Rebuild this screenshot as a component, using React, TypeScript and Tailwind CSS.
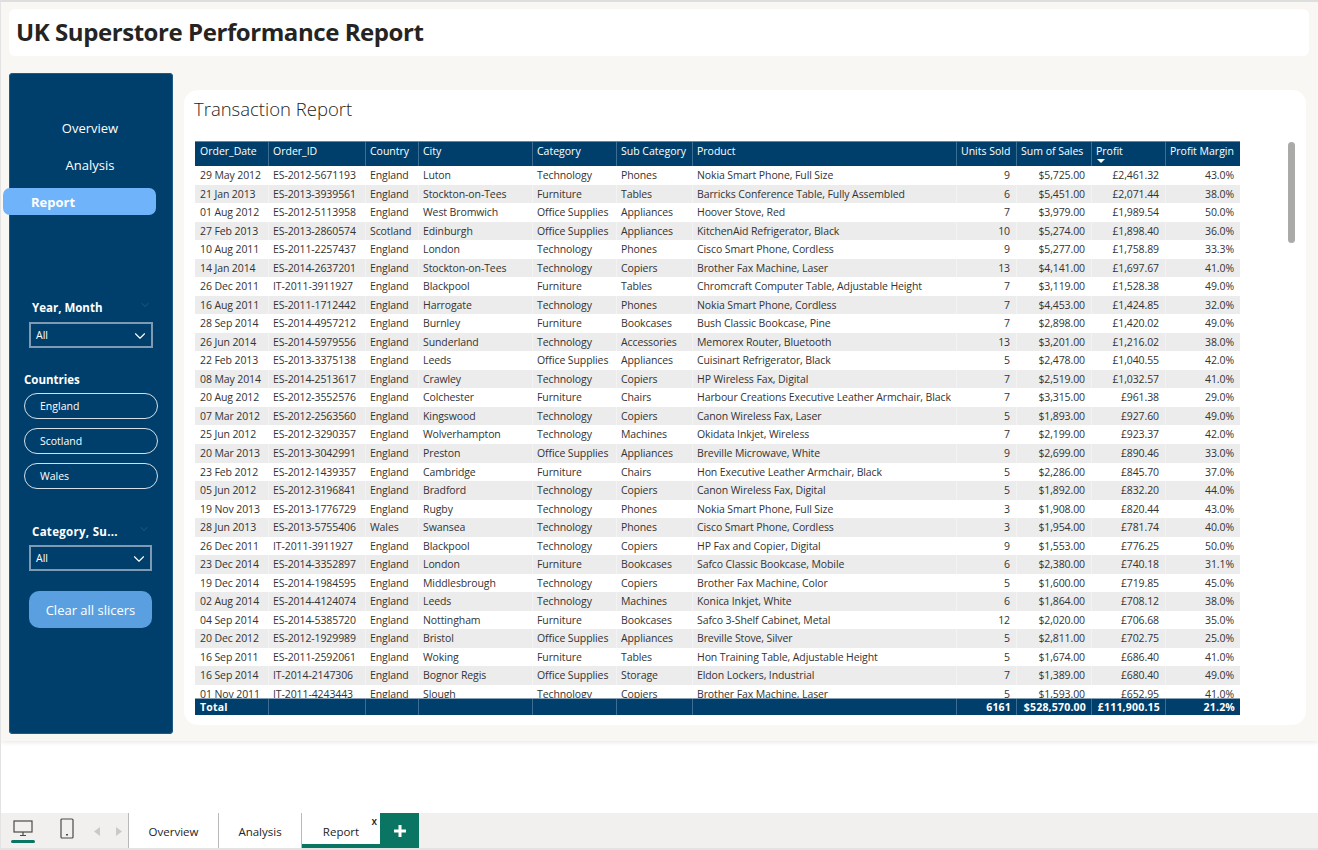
import { ChevronDown } from 'lucide-react'

const FONT = 'font-["Open_Sans",sans-serif]'
const COLS = 'grid grid-cols-[73px_97px_53px_114px_84px_76px_264px_60px_75px_74px_75px]'

const HEADERS = [
  'Order_Date', 'Order_ID', 'Country', 'City', 'Category', 'Sub Category', 'Product',
  'Units Sold', 'Sum of Sales', 'Profit', 'Profit Margin',
]

const ROWS = [
  ['29 May 2012', 'ES-2012-5671193', 'England', 'Luton', 'Technology', 'Phones', 'Nokia Smart Phone, Full Size', '9', '$5,725.00', '£2,461.32', '43.0%'],
  ['21 Jan 2013', 'ES-2013-3939561', 'England', 'Stockton-on-Tees', 'Furniture', 'Tables', 'Barricks Conference Table, Fully Assembled', '6', '$5,451.00', '£2,071.44', '38.0%'],
  ['01 Aug 2012', 'ES-2012-5113958', 'England', 'West Bromwich', 'Office Supplies', 'Appliances', 'Hoover Stove, Red', '7', '$3,979.00', '£1,989.54', '50.0%'],
  ['27 Feb 2013', 'ES-2013-2860574', 'Scotland', 'Edinburgh', 'Office Supplies', 'Appliances', 'KitchenAid Refrigerator, Black', '10', '$5,274.00', '£1,898.40', '36.0%'],
  ['10 Aug 2011', 'ES-2011-2257437', 'England', 'London', 'Technology', 'Phones', 'Cisco Smart Phone, Cordless', '9', '$5,277.00', '£1,758.89', '33.3%'],
  ['14 Jan 2014', 'ES-2014-2637201', 'England', 'Stockton-on-Tees', 'Technology', 'Copiers', 'Brother Fax Machine, Laser', '13', '$4,141.00', '£1,697.67', '41.0%'],
  ['26 Dec 2011', 'IT-2011-3911927', 'England', 'Blackpool', 'Furniture', 'Tables', 'Chromcraft Computer Table, Adjustable Height', '7', '$3,119.00', '£1,528.38', '49.0%'],
  ['16 Aug 2011', 'ES-2011-1712442', 'England', 'Harrogate', 'Technology', 'Phones', 'Nokia Smart Phone, Cordless', '7', '$4,453.00', '£1,424.85', '32.0%'],
  ['28 Sep 2014', 'ES-2014-4957212', 'England', 'Burnley', 'Furniture', 'Bookcases', 'Bush Classic Bookcase, Pine', '7', '$2,898.00', '£1,420.02', '49.0%'],
  ['26 Jun 2014', 'ES-2014-5979556', 'England', 'Sunderland', 'Technology', 'Accessories', 'Memorex Router, Bluetooth', '13', '$3,201.00', '£1,216.02', '38.0%'],
  ['22 Feb 2013', 'ES-2013-3375138', 'England', 'Leeds', 'Office Supplies', 'Appliances', 'Cuisinart Refrigerator, Black', '5', '$2,478.00', '£1,040.55', '42.0%'],
  ['08 May 2014', 'ES-2014-2513617', 'England', 'Crawley', 'Technology', 'Copiers', 'HP Wireless Fax, Digital', '7', '$2,519.00', '£1,032.57', '41.0%'],
  ['20 Aug 2012', 'ES-2012-3552576', 'England', 'Colchester', 'Furniture', 'Chairs', 'Harbour Creations Executive Leather Armchair, Black', '7', '$3,315.00', '£961.38', '29.0%'],
  ['07 Mar 2012', 'ES-2012-2563560', 'England', 'Kingswood', 'Technology', 'Copiers', 'Canon Wireless Fax, Laser', '5', '$1,893.00', '£927.60', '49.0%'],
  ['25 Jun 2012', 'ES-2012-3290357', 'England', 'Wolverhampton', 'Technology', 'Machines', 'Okidata Inkjet, Wireless', '7', '$2,199.00', '£923.37', '42.0%'],
  ['20 Mar 2013', 'ES-2013-3042991', 'England', 'Preston', 'Office Supplies', 'Appliances', 'Breville Microwave, White', '9', '$2,699.00', '£890.46', '33.0%'],
  ['23 Feb 2012', 'ES-2012-1439357', 'England', 'Cambridge', 'Furniture', 'Chairs', 'Hon Executive Leather Armchair, Black', '5', '$2,286.00', '£845.70', '37.0%'],
  ['05 Jun 2012', 'ES-2012-3196841', 'England', 'Bradford', 'Technology', 'Copiers', 'Canon Wireless Fax, Digital', '5', '$1,892.00', '£832.20', '44.0%'],
  ['19 Nov 2013', 'ES-2013-1776729', 'England', 'Rugby', 'Technology', 'Phones', 'Nokia Smart Phone, Full Size', '3', '$1,908.00', '£820.44', '43.0%'],
  ['28 Jun 2013', 'ES-2013-5755406', 'Wales', 'Swansea', 'Technology', 'Phones', 'Cisco Smart Phone, Cordless', '3', '$1,954.00', '£781.74', '40.0%'],
  ['26 Dec 2011', 'IT-2011-3911927', 'England', 'Blackpool', 'Technology', 'Copiers', 'HP Fax and Copier, Digital', '9', '$1,553.00', '£776.25', '50.0%'],
  ['23 Dec 2014', 'ES-2014-3352897', 'England', 'London', 'Furniture', 'Bookcases', 'Safco Classic Bookcase, Mobile', '6', '$2,380.00', '£740.18', '31.1%'],
  ['19 Dec 2014', 'ES-2014-1984595', 'England', 'Middlesbrough', 'Technology', 'Copiers', 'Brother Fax Machine, Color', '5', '$1,600.00', '£719.85', '45.0%'],
  ['02 Aug 2014', 'ES-2014-4124074', 'England', 'Leeds', 'Technology', 'Machines', 'Konica Inkjet, White', '6', '$1,864.00', '£708.12', '38.0%'],
  ['04 Sep 2014', 'ES-2014-5385720', 'England', 'Nottingham', 'Furniture', 'Bookcases', 'Safco 3-Shelf Cabinet, Metal', '12', '$2,020.00', '£706.68', '35.0%'],
  ['20 Dec 2012', 'ES-2012-1929989', 'England', 'Bristol', 'Office Supplies', 'Appliances', 'Breville Stove, Silver', '5', '$2,811.00', '£702.75', '25.0%'],
  ['16 Sep 2011', 'ES-2011-2592061', 'England', 'Woking', 'Furniture', 'Tables', 'Hon Training Table, Adjustable Height', '5', '$1,674.00', '£686.40', '41.0%'],
  ['16 Sep 2014', 'IT-2014-2147306', 'England', 'Bognor Regis', 'Office Supplies', 'Storage', 'Eldon Lockers, Industrial', '7', '$1,389.00', '£680.40', '49.0%'],
  ['01 Nov 2011', 'IT-2011-4243443', 'England', 'Slough', 'Technology', 'Copiers', 'Brother Fax Machine, Laser', '5', '$1,593.00', '£652.95', '41.0%'],
]

const TOTALS = ['Total', '', '', '', '', '', '', '6161', '$528,570.00', '£111,900.15', '21.2%']

function Dropdown({ width }: { width: string }) {
  return (
    <div className={`${width} h-[26px] border-2 border-[#7f9ab3] flex items-center justify-between pl-[5px] pr-[2px] pt-[2px] text-[10.5px] text-white`}>
      All
      <ChevronDown size={18} strokeWidth={1.5} className="text-white" />
    </div>
  )
}

function Sidebar() {
  return (
    <aside className="w-[164px] h-[661px] shrink-0 rounded-[4px] bg-[#003f6b] shadow-[inset_0_0_0_1px_#1f5a85] text-white flex flex-col">
      <div className="pt-[46px] pr-[2px] flex flex-col items-center gap-[18px] text-[13px] h-[115px]">
        <span className="h-[19px] leading-[19px]">Overview</span>
        <span className="h-[19px] leading-[19px]">Analysis</span>
      </div>
      <div className="-ml-[6px] w-[153px] h-[27px] rounded-[7px] bg-[#6fb3fa] pl-[28px] text-[13px] leading-[29px] font-bold">
        Report
      </div>
      <div className="mt-[83px] pl-[20px] pr-[22px]">
        <div className="flex items-center justify-between pl-[3px] h-[19px] text-[11.5px] font-bold">
          Year, Month
          <ChevronDown size={12} strokeWidth={1} className="-mt-[6px] text-[#4d7391]" />
        </div>
        <div className="mt-[5px]">
          <Dropdown width="w-[124px]" />
        </div>
      </div>
      <div className="mt-[23px] pl-[15px]">
        <div className="h-[17px] leading-[17px] text-[11.5px] font-bold">Countries</div>
        <div className="mt-[5px] flex flex-col gap-[9px]">
          {['England', 'Scotland', 'Wales'].map(c => (
            <div key={c} className="w-[134px] h-[26px] rounded-full border border-[#d5dfe8] pl-[15px] text-[10.5px] leading-[24px]">
              {c}
            </div>
          ))}
        </div>
      </div>
      <div className="mt-[33px] pl-[20px] pr-[23px]">
        <div className="flex items-center justify-between pl-[3px] h-[19px] text-[11.5px] font-bold tracking-[0.3px]">
          Category, Su...
          <ChevronDown size={12} strokeWidth={1} className="-mt-[6px] text-[#4d7391]" />
        </div>
        <div className="mt-[4px]">
          <Dropdown width="w-[123px]" />
        </div>
      </div>
      <div className="mt-[20px] ml-[20px] w-[123px] h-[37px] rounded-[10px] bg-[#5a9fe0] flex items-center justify-center pt-[3px] text-[13px]">
        Clear all slicers
      </div>
    </aside>
  )
}

function ReportTable() {
  return (
    <div className="w-[1045px] text-[10.5px] tracking-[-0.1px]">
      <div className={`${COLS} h-[25px] bg-[#003f6b] text-white border-t border-[#5f87a6] tracking-[0px]`}>
        {HEADERS.map(h => (
          <div key={h} className="relative pl-[4px] first:pl-[5px] pt-[2px] whitespace-nowrap overflow-hidden border-l border-[#3c6d92] first:border-l-0">
            {h}
            {h === 'Profit' && (
              <span className="absolute left-[5px] top-[17px] w-0 h-0 border-x-[4px] border-x-transparent border-t-[4px] border-t-white" />
            )}
          </div>
        ))}
      </div>
      <div className="h-[532px] overflow-hidden text-[#333333]">
        {ROWS.map((r, ri) => (
          <div key={ri} className={`${COLS} h-[18.54px] leading-[18px] ${ri % 2 ? 'bg-[#ececec]' : 'bg-white'}`}>
            {r.map((c, i) => (
              <div
                key={i}
                className={`whitespace-nowrap overflow-hidden pl-[4px] first:pl-[5px] pr-[6px] border-l first:border-l-0 ${ri % 2 ? 'border-l-[#f3f3f3]' : 'border-l-white'} ${i > 6 ? 'text-right' : ''}`}
              >
                {c}
              </div>
            ))}
          </div>
        ))}
      </div>
      <div className={`${COLS} h-[17px] bg-[#003f6b] text-white font-bold border-t border-[#8aa2b5] tracking-[0.2px]`}>
        {TOTALS.map((c, i) => (
          <div key={i} className={`whitespace-nowrap pl-[4px] first:pl-[5px] pr-[5px] leading-[16px] border-l border-[#3c6d92] first:border-l-0 ${i > 6 ? 'text-right' : ''}`}>
            {c}
          </div>
        ))}
      </div>
    </div>
  )
}

function TabBar() {
  return (
    <div className="h-[37px] bg-[#f1f0ee] flex items-stretch border-b-2 border-[#e3e3e3] text-[11.5px] text-[#252423]">
      <div className="w-[128px] flex items-start border-r border-[#b8b8b8] shrink-0">
        <div className="w-[24px] ml-[10px] mt-[7px] flex flex-col items-center">
          <svg width="20" height="17" viewBox="0 0 20 17" fill="none">
            <rect x="1" y="1" width="18" height="11" fill="none" stroke="#4a4a4a" strokeWidth="1.2" />
            <path d="M7 15.5h6M10 12v3.5" stroke="#4a4a4a" strokeWidth="1.2" />
          </svg>
          <div className="mt-[3px] w-[24px] h-[3px] rounded-full bg-[#0a7562]" />
        </div>
        <svg className="ml-[25px] mt-[5px]" width="14" height="21" viewBox="0 0 14 21" fill="none">
          <rect x="1" y="1" width="12" height="19" rx="1" stroke="#4a4a4a" strokeWidth="1.2" />
          <rect x="6" y="16" width="2" height="1.5" fill="#4a4a4a" />
        </svg>
        <svg className="ml-[20px] mt-[14px]" width="6" height="9" viewBox="0 0 6 9">
          <path d="M6 0v9L0 4.5z" fill="#c9c9c9" />
        </svg>
        <svg className="ml-[16px] mt-[14px]" width="6" height="9" viewBox="0 0 6 9">
          <path d="M0 0v9l6-4.5z" fill="#c9c9c9" />
        </svg>
      </div>
      <div className="w-[90px] bg-white border-r border-[#b8b8b8] flex items-center justify-center pt-[2px]">Overview</div>
      <div className="w-[83px] bg-white border-r border-[#b8b8b8] flex items-center justify-center pt-[2px]">Analysis</div>
      <div className="relative w-[78px] bg-white border-b-4 border-[#0a7562] flex items-center justify-center pt-[6px]">
        Report
        <span className="absolute right-[3px] top-[2px] text-[10px] font-semibold leading-[12px]">x</span>
      </div>
      <div className="w-[39px] bg-[#0a7562] flex items-center justify-center">
        <svg width="12" height="12" viewBox="0 0 12 12">
          <path d="M6 0v12M0 6h12" stroke="white" strokeWidth="3" />
        </svg>
      </div>
    </div>
  )
}

export default function App() {
  return (
    <div className={`${FONT} w-[1318px] h-[850px] overflow-hidden bg-white flex flex-col border-l border-[#e3e3e3] border-t-2 border-t-[#dedede]`}>
      <div className="h-[739px] shrink-0 bg-[#f8f7f3] shadow-[0_2px_4px_rgba(0,0,0,0.08)] pl-[8px] pr-[8px] pt-[7px]">
        <div className="h-[47px] w-[1300px] rounded-[6px] bg-white pl-[7px] text-[24px] leading-[46px] font-bold text-[#252423] tracking-[-0.43px]">
          UK Superstore Performance Report
        </div>
        <div className="mt-[17px] flex items-start">
          <Sidebar />
          <main className="relative ml-[11px] mt-[17px] w-[1122px] h-[635px] rounded-[14px] bg-white pl-[10px]">
            <h1 className="h-[51px] pt-[6px] text-[18.5px] leading-[26px] font-light text-[#252423]">Transaction Report</h1>
            <div className="pl-[1px]">
              <ReportTable />
            </div>
            {/* Scrollbar thumb */}
            <div className="absolute left-[1104px] top-[52px] w-[7px] h-[101px] rounded-full bg-[#aaaaa8]" />
          </main>
        </div>
      </div>
      <div className="flex-1" />
      <TabBar />
    </div>
  )
}
